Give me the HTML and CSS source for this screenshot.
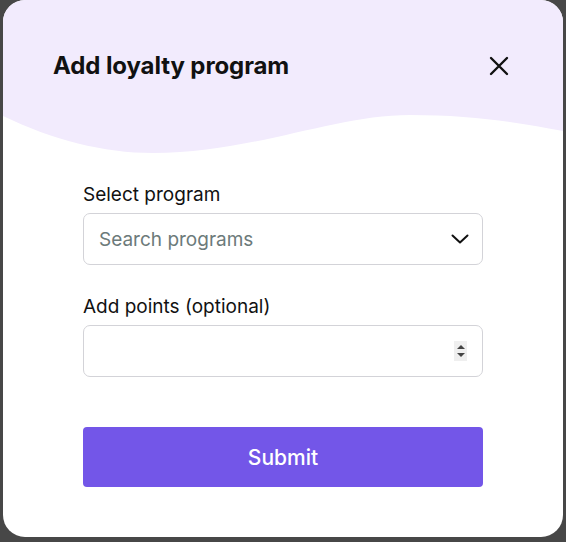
FILE: index.html
```html
<!DOCTYPE html>
<html lang="en">
<head>
    <meta charset="UTF-8">
    <meta name="viewport" content="width=device-width, initial-scale=1.0">
    <title>Add loyalty program</title>
    <link rel="stylesheet" href="styles.css">
</head>
<body>
    <div class="modal">
        <svg class="wave" width="560" height="160" viewBox="0 0 560 160" preserveAspectRatio="none">
            <path d="M0,0 H560 V131 C520,123 470,115 407,115 C330,115 250,153 150,153 C100,153 50,140 0,116 Z" fill="#f2ebfd"/>
        </svg>

        <div class="modal-header">
            <h1>Add loyalty program</h1>
            <button class="close" aria-label="Close">
                <svg width="20" height="20" viewBox="0 0 20 20">
                    <path d="M2 2 L18 18 M18 2 L2 18" stroke="#111" stroke-width="2.4" stroke-linecap="round"/>
                </svg>
            </button>
        </div>

        <div class="modal-body">
            <div class="form-group">
                <label for="program">Select program</label>
                <div class="field">
                    <input type="text" id="program" placeholder="Search programs">
                    <svg class="chevron" width="18" height="10" viewBox="0 0 18 10">
                        <path d="M1.5 1.5 L9 8.5 L16.5 1.5" fill="none" stroke="#111" stroke-width="2" stroke-linecap="round" stroke-linejoin="round"/>
                    </svg>
                </div>
            </div>
            <div class="form-group">
                <label for="points">Add points (optional)</label>
                <div class="field">
                    <input type="text" id="points">
                    <span class="spinner">
                        <span class="up"></span>
                        <span class="down"></span>
                    </span>
                </div>
            </div>
            <button class="button">Submit</button>
        </div>
    </div>
</body>
</html>
```

FILE: styles.css
```css
body {
    font-family: Inter, "Noto Sans", sans-serif;
    background-color: #474747;
    margin: 0;
    padding: 0;
}

.modal {
    position: relative;
    width: 560px;
    height: 537px;
    margin: 0 3px;
    background-color: #ffffff;
    border-radius: 22px;
    overflow: hidden;
}

.wave {
    position: absolute;
    top: 0;
    left: 0;
}

.modal-header {
    position: relative;
    display: flex;
    align-items: center;
    justify-content: space-between;
    padding: 50px 54px 0 50px;
}

h1 {
    margin: 0;
    font-size: 24px;
    line-height: 32px;
    font-weight: 700;
    color: #111111;
    letter-spacing: -0.1px;
}

.close {
    background: none;
    border: none;
    padding: 0;
    width: 20px;
    height: 20px;
    cursor: pointer;
}

.close svg {
    display: block;
}

.modal-body {
    position: relative;
    padding: 101px 80px 0 80px;
}

.form-group {
    margin-bottom: 30px;
}

label {
    display: block;
    margin-bottom: 6px;
    font-size: 19px;
    line-height: 24px;
    color: #111111;
}

.field {
    display: flex;
    align-items: center;
    height: 50px;
    border: 1px solid #d3d3d8;
    border-radius: 7px;
    padding: 0 13px 0 15px;
}

.field input {
    flex: 1;
    border: none;
    outline: none;
    padding: 0;
    font-family: inherit;
    font-size: 19px;
    color: #111111;
    background: transparent;
}

.field input::placeholder {
    color: #6c7a7a;
}

.chevron {
    display: block;
}

.spinner {
    display: flex;
    flex-direction: column;
    align-items: center;
    justify-content: center;
    gap: 4px;
    width: 13px;
    height: 20px;
    margin-right: 2px;
    background-color: #efefef;
}

.spinner .up {
    border-left: 4px solid transparent;
    border-right: 4px solid transparent;
    border-bottom: 4px solid #444;
}

.spinner .down {
    border-left: 4px solid transparent;
    border-right: 4px solid transparent;
    border-top: 4px solid #444;
}

.button {
    display: block;
    width: 100%;
    height: 60px;
    margin-top: 50px;
    background-color: #7356e8;
    color: #ffffff;
    border: none;
    border-radius: 4px;
    font-family: inherit;
    font-size: 21px;
    font-weight: 500;
    cursor: pointer;
}
```
